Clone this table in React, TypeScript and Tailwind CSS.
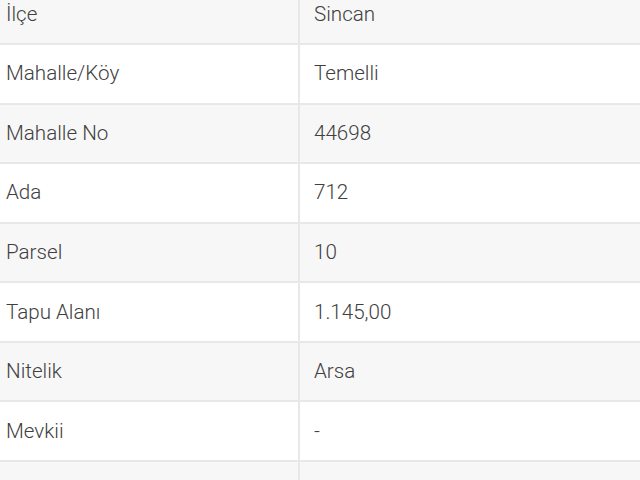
import React from "react";

const rows: [string, string][] = [
  ["İlçe", "Sincan"],
  ["Mahalle/Köy", "Temelli"],
  ["Mahalle No", "44698"],
  ["Ada", "712"],
  ["Parsel", "10"],
  ["Tapu Alanı", "1.145,00"],
  ["Nitelik", "Arsa"],
  ["Mevkii", "-"],
  ["", ""],
];

export default function App() {
  return (
    <div className="w-[640px] h-[480px] overflow-hidden bg-white" style={{ fontFamily: "Roboto, 'Noto Sans', sans-serif" }}>
      <div className="-mt-[14.6px] flex flex-col">
        {rows.map(([k, v], i) => (
          <div
            key={i}
            className={`flex h-[59.57px] border-b-2 border-[#e8e8e8] text-[20.6px] font-light text-[#404040] ${i % 2 === 0 ? "bg-[#f7f7f7]" : "bg-white"}`}
          >
            <div className="w-[300px] shrink-0 border-r-2 border-[#e8e8e8] pl-[6px] flex items-center">{k}</div>
            <div className="flex-1 pl-[14px] flex items-center">{v}</div>
          </div>
        ))}
      </div>
    </div>
  );
}
